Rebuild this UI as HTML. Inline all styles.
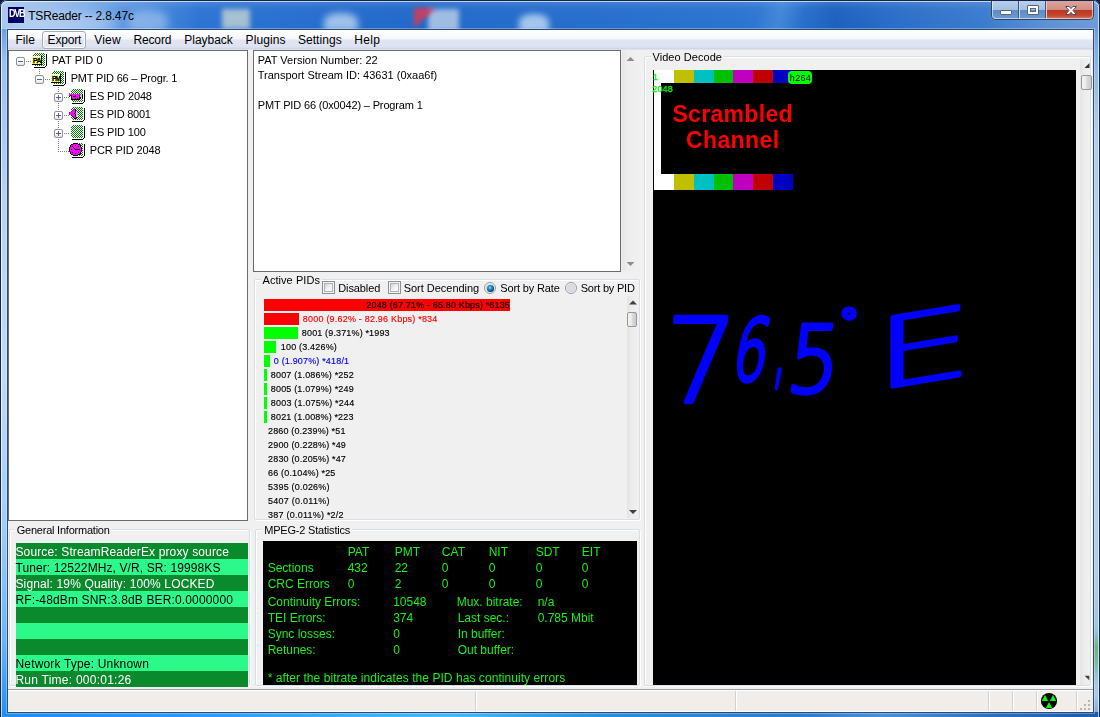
<!DOCTYPE html>
<html><head><meta charset="utf-8"><title>TSReader -- 2.8.47c</title>
<style>
html,body{margin:0;padding:0}
body{width:1100px;height:717px;overflow:hidden;position:relative;background:#0b1a40;font-family:"Liberation Sans",sans-serif;font-size:11px;color:#000}
div,svg{position:absolute}
.t{white-space:pre}
#frame{left:0;top:0;width:1100px;height:717px;border-radius:7px 7px 0 0;background:linear-gradient(180deg,#86b0e4 0,#6ea2dd 12px,#6b9fdb 29px,#9dc0ea 60px,#b8d3f1 200px,#c0d9f4 380px,#a4cdf4 520px,#6cb4f4 640px,#3a9cf0 690px,#1e8ff0 717px)}
#tb{left:0;top:0;width:1100px;height:29px;overflow:hidden;border-radius:7px 7px 0 0;background:linear-gradient(180deg,rgba(255,255,255,.16) 0,rgba(255,255,255,.03) 30%,rgba(255,255,255,0) 100%),linear-gradient(90deg,#a9c8ef 0,#8db6ea 50px,#5a96e2 120px,#2b73d3 200px,#2068ca 400px,#256dcc 600px,#2a73d0 740px,#2e78d3 780px,#1b60be 835px,#2a6ec9 900px,#3a7bce 985px,#5e92d5 1050px,#6d9cd6 1100px)}
#fr-outer{left:0;top:0;width:1098px;height:725px;border:1px solid #14254a;border-radius:7px 7px 2px 2px}
#fr-inner{left:1px;top:1px;width:1096px;height:725px;border:1px solid rgba(255,255,255,.65);border-radius:6px 6px 1px 1px}
#cap{left:991px;top:1px;width:103px;height:19px}
#client{left:7px;top:29px;width:1085px;height:682px;border:1px solid #2a4a78;background:#f0f0f0;outline:1px solid rgba(255,255,255,.3)}
#menubar{left:8px;top:30px;width:1085px;height:20px;background:linear-gradient(180deg,#fff 0,#f6f7fc 9px,#e2e6f3 10px,#dde2f0 17px,#cdd3e4 19px,#f0f0f0 20px)}
#pidlist{left:0;top:0}
</style></head>
<body>
<svg width="0" height="0" style="left:0;top:0"><defs>
<pattern id="gck" width="2" height="2" patternUnits="userSpaceOnUse"><rect width="2" height="2" fill="#fff"/><rect x="1" y="0" width="1" height="1" fill="#008000"/><rect x="0" y="1" width="1" height="1" fill="#008000"/></pattern>
<pattern id="yck" width="2" height="2" patternUnits="userSpaceOnUse"><rect width="2" height="2" fill="#ffff00"/><rect x="0" y="0" width="1" height="1" fill="#fff"/><rect x="1" y="1" width="1" height="1" fill="#fff"/></pattern>
</defs></svg>
<div id="frame"></div>
<div id="tb"><div style="left:8px;top:10px;width:110px;height:26px;background:#cfe0f6;opacity:.55;filter:blur(7px);border-radius:50%"></div><div style="left:128px;top:10px;width:40px;height:24px;background:#a9c8f0;opacity:.6;filter:blur(4px);border-radius:40%"></div><div style="left:222px;top:9px;width:28px;height:20px;background:#f0f0d2;opacity:.62;filter:blur(2.5px)"></div><div style="left:324px;top:13px;width:34px;height:18px;background:#b4d0f0;opacity:.85;filter:blur(3.5px);border-radius:45% 45% 0 0"></div><div style="left:428px;top:9px;width:31px;height:22px;background:#adc6e6;opacity:.9;filter:blur(2.5px)"></div><div style="left:414px;top:8px;width:0;height:0;border-top:20px solid #d23c58;border-right:22px solid transparent;opacity:.9;filter:blur(2px)"></div><div style="left:519px;top:14px;width:30px;height:18px;background:#b9d6f3;opacity:.85;filter:blur(3px);border-radius:45% 45% 0 0"></div><div style="left:740px;top:-10px;width:80px;height:50px;background:linear-gradient(105deg,rgba(255,255,255,0) 25%,rgba(110,165,230,.3) 50%,rgba(255,255,255,0) 75%)"></div></div>
<div style="left:1094px;top:29px;width:6px;height:688px;background:linear-gradient(180deg,#6b9fdb 0,#8fb6e6 40px,#adcbef 100px,#b9d3f2 300px,#aecbee 560px,#9cc4e0 600px,#6fb08c 618px,#79b89a 632px,#a6c8ea 655px,#a9c8ee 665px,#8db0de 680px,#6a94c8 700px,#4a7cc0 712px)"></div>
<div style="left:1px;top:712px;width:1098px;height:5px;background:linear-gradient(90deg,#1e8ff0 0,#2a9cf4 200px,#44b8f8 450px,#2a8ee0 600px,#2a7cd0 800px,#4a90d8 880px,#2a6cc0 1000px,#1c5cb0 1100px)"></div>
<div id="fr-outer"></div><div id="fr-inner"></div>
<div style="left:8px;top:7px;width:16px;height:16px;background:#000064"></div>
<div class="t" style="left:9px;top:9px;font-size:9px;line-height:10px;font-weight:bold;color:#fff;letter-spacing:-1.2px;transform:scaleY(1.15);transform-origin:0 8px">DVB</div>
<div id="cap">
<div style="left:0;top:0;width:28px;height:19px;background:linear-gradient(180deg,#b9cfea 0,#a3bfe3 47%,#5d8cc6 50%,#6f9cd3 100%);border-radius:0 0 0 5px"></div>
<div style="left:28px;top:0;width:27px;height:19px;background:linear-gradient(180deg,#b9cfea 0,#a3bfe3 47%,#5d8cc6 50%,#6f9cd3 100%)"></div>
<div style="left:55px;top:0;width:48px;height:19px;background:linear-gradient(180deg,#dba49c 0,#d18c82 47%,#bd3822 50%,#c5452c 75%,#d58a72 100%);border-radius:0 0 5px 0"></div>
<div style="left:27px;top:0;width:1px;height:19px;background:#3b5782"></div><div style="left:28px;top:0;width:1px;height:19px;background:#c9d9ee"></div>
<div style="left:54px;top:0;width:1px;height:19px;background:#3b5782"></div><div style="left:55px;top:0;width:1px;height:19px;background:#ecc9c4"></div>
<div style="left:0;top:0;width:101px;height:18px;border:1px solid #2d4468;border-top:none;border-radius:0 0 5px 5px"></div>
<div style="left:1px;top:0;width:99px;height:17px;border:1px solid rgba(255,255,255,.55);border-top:none;border-radius:0 0 4px 4px"></div>
<div style="left:9px;top:9px;width:10px;height:3px;background:#fff;border:1px solid #5a6477;border-radius:1px"></div>
<div style="left:36px;top:4px;width:10px;height:8px;border:1px solid #5a6477;border-radius:1px"></div>
<div style="left:37px;top:5px;width:6px;height:4px;border:2px solid #fff"></div>
<div style="left:39px;top:7px;width:4px;height:2px;border:1px solid #5a6477"></div>
<svg style="left:73px;top:4px" width="14" height="11" viewBox="0 0 14 11"><path d="M1.5 1.5H5.2L7 3.6L8.8 1.5H12.5L9 5.4L12.5 9.5H8.8L7 7.3L5.2 9.5H1.5L5 5.4Z" fill="#fff" stroke="#4a4f5e" stroke-width="1"/></svg>
</div>
<div id="client"></div>
<div id="menubar"></div>
<div style="left:42px;top:31px;width:42px;height:16px;border:1px solid #a8acb6;border-radius:3px;background:linear-gradient(180deg,#fbfcfe 0,#eef1f8 50%,#dfe4f0 52%,#e4e9f4 100%);box-shadow:inset 0 0 0 1px rgba(255,255,255,.8)"></div>
<div style="left:8px;top:50px;width:238px;height:469px;border:1px solid #6b6b6b;background:#fff"></div>
<div style="left:26px;top:61px;width:5px;height:1px;background:repeating-linear-gradient(90deg,#808080 0,#808080 1px,transparent 1px,transparent 2px)"></div>
<div style="left:39px;top:69px;width:1px;height:7px;background:repeating-linear-gradient(180deg,#808080 0,#808080 1px,transparent 1px,transparent 2px)"></div>
<div style="left:45px;top:79px;width:5px;height:1px;background:repeating-linear-gradient(90deg,#808080 0,#808080 1px,transparent 1px,transparent 2px)"></div>
<div style="left:58px;top:87px;width:1px;height:63px;background:repeating-linear-gradient(180deg,#808080 0,#808080 1px,transparent 1px,transparent 2px)"></div>
<div style="left:64px;top:97px;width:5px;height:1px;background:repeating-linear-gradient(90deg,#808080 0,#808080 1px,transparent 1px,transparent 2px)"></div>
<div style="left:64px;top:115px;width:5px;height:1px;background:repeating-linear-gradient(90deg,#808080 0,#808080 1px,transparent 1px,transparent 2px)"></div>
<div style="left:64px;top:133px;width:5px;height:1px;background:repeating-linear-gradient(90deg,#808080 0,#808080 1px,transparent 1px,transparent 2px)"></div>
<div style="left:58px;top:151px;width:11px;height:1px;background:repeating-linear-gradient(90deg,#808080 0,#808080 1px,transparent 1px,transparent 2px)"></div>
<div style="left:16px;top:57px;width:7px;height:7px;border:1px solid #919191;border-radius:2px;background:linear-gradient(180deg,#fff 0,#fff 45%,#e3e3e3 100%)"></div><div style="left:18px;top:61px;width:5px;height:1px;background:#4b63a7"></div>
<div style="left:35px;top:75px;width:7px;height:7px;border:1px solid #919191;border-radius:2px;background:linear-gradient(180deg,#fff 0,#fff 45%,#e3e3e3 100%)"></div><div style="left:37px;top:79px;width:5px;height:1px;background:#4b63a7"></div>
<div style="left:54px;top:93px;width:7px;height:7px;border:1px solid #919191;border-radius:2px;background:linear-gradient(180deg,#fff 0,#fff 45%,#e3e3e3 100%)"></div><div style="left:56px;top:97px;width:5px;height:1px;background:#4b63a7"></div><div style="left:58px;top:95px;width:1px;height:5px;background:#4b63a7"></div>
<div style="left:54px;top:111px;width:7px;height:7px;border:1px solid #919191;border-radius:2px;background:linear-gradient(180deg,#fff 0,#fff 45%,#e3e3e3 100%)"></div><div style="left:56px;top:115px;width:5px;height:1px;background:#4b63a7"></div><div style="left:58px;top:113px;width:1px;height:5px;background:#4b63a7"></div>
<div style="left:54px;top:129px;width:7px;height:7px;border:1px solid #919191;border-radius:2px;background:linear-gradient(180deg,#fff 0,#fff 45%,#e3e3e3 100%)"></div><div style="left:56px;top:133px;width:5px;height:1px;background:#4b63a7"></div><div style="left:58px;top:131px;width:1px;height:5px;background:#4b63a7"></div>
<svg style="left:31px;top:52px" width="16" height="16" viewBox="0 0 16 16" shape-rendering="crispEdges"><path d="M3 0H13V1H14V2H15V13H14V14H13V15H3V14H2V13H1V2H2V1H3Z" fill="#fff"/><path d="M4 1H13V2H14V12H14V13H13V14H4V13H3V12H2V3H3V2H4Z" fill="url(#gck)"/><rect x="15" y="2" width="1" height="12" fill="#000"/><rect x="14" y="14" width="1" height="1" fill="#000"/><rect x="3" y="15" width="11" height="1" fill="#000"/><rect x="0" y="4" width="11" height="9" fill="#fff"/><rect x="1" y="5" width="9" height="7" fill="url(#yck)"/><rect x="10" y="4" width="1" height="9" fill="#000"/><rect x="1" y="12" width="10" height="1" fill="#000"/></svg>
<svg style="left:50px;top:70px" width="16" height="16" viewBox="0 0 16 16" shape-rendering="crispEdges"><path d="M3 0H13V1H14V2H15V13H14V14H13V15H3V14H2V13H1V2H2V1H3Z" fill="#fff"/><path d="M4 1H13V2H14V12H14V13H13V14H4V13H3V12H2V3H3V2H4Z" fill="url(#gck)"/><rect x="15" y="2" width="1" height="12" fill="#000"/><rect x="14" y="14" width="1" height="1" fill="#000"/><rect x="3" y="15" width="11" height="1" fill="#000"/><rect x="0" y="4" width="11" height="9" fill="#fff"/><rect x="1" y="5" width="9" height="7" fill="url(#yck)"/><rect x="10" y="4" width="1" height="9" fill="#000"/><rect x="1" y="12" width="10" height="1" fill="#000"/></svg>
<svg style="left:69px;top:88px" width="16" height="16" viewBox="0 0 16 16" shape-rendering="crispEdges"><path d="M3 0H13V1H14V2H15V13H14V14H13V15H3V14H2V13H1V2H2V1H3Z" fill="#fff"/><path d="M4 1H13V2H14V12H14V13H13V14H4V13H3V12H2V3H3V2H4Z" fill="url(#gck)"/><rect x="15" y="2" width="1" height="12" fill="#000"/><rect x="14" y="14" width="1" height="1" fill="#000"/><rect x="3" y="15" width="11" height="1" fill="#000"/><rect x="0" y="5" width="1" height="1" fill="#ff00ff"/><rect x="0" y="6" width="11" height="1" fill="#ff00ff"/><rect x="13" y="6" width="1" height="1" fill="#000"/><rect x="0" y="7" width="1" height="1" fill="#ff00ff"/><rect x="1" y="7" width="2" height="1" fill="#000"/><rect x="3" y="7" width="3" height="1" fill="#ff00ff"/><rect x="6" y="7" width="1" height="1" fill="#000"/><rect x="7" y="7" width="3" height="1" fill="#ff00ff"/><rect x="10" y="7" width="1" height="1" fill="#000"/><rect x="11" y="7" width="2" height="1" fill="#c0c0c0"/><rect x="13" y="7" width="1" height="1" fill="#000"/><rect x="0" y="8" width="1" height="1" fill="#000"/><rect x="2" y="8" width="1" height="1" fill="#000"/><rect x="3" y="8" width="1" height="1" fill="#ff00ff"/><rect x="4" y="8" width="3" height="1" fill="#000"/><rect x="7" y="8" width="3" height="1" fill="#ff00ff"/><rect x="10" y="8" width="1" height="1" fill="#000"/><rect x="11" y="8" width="2" height="1" fill="#c0c0c0"/><rect x="13" y="8" width="1" height="1" fill="#000"/><rect x="2" y="9" width="1" height="1" fill="#000"/><rect x="3" y="9" width="7" height="1" fill="#ff00ff"/><rect x="10" y="9" width="2" height="1" fill="#000"/><rect x="12" y="9" width="1" height="1" fill="#c0c0c0"/><rect x="13" y="9" width="1" height="1" fill="#000"/><rect x="2" y="10" width="1" height="1" fill="#000"/><rect x="3" y="10" width="3" height="1" fill="#ff00ff"/><rect x="6" y="10" width="1" height="1" fill="#000"/><rect x="7" y="10" width="1" height="1" fill="#ff00ff"/><rect x="8" y="10" width="1" height="1" fill="#000"/><rect x="9" y="10" width="1" height="1" fill="#ff00ff"/><rect x="10" y="10" width="2" height="1" fill="#000"/><rect x="13" y="10" width="1" height="1" fill="#000"/><rect x="2" y="11" width="9" height="1" fill="#000"/></svg>
<svg style="left:69px;top:106px" width="16" height="16" viewBox="0 0 16 16" shape-rendering="crispEdges"><path d="M3 0H13V1H14V2H15V13H14V14H13V15H3V14H2V13H1V2H2V1H3Z" fill="#fff"/><path d="M4 1H13V2H14V12H14V13H13V14H4V13H3V12H2V3H3V2H4Z" fill="url(#gck)"/><rect x="15" y="2" width="1" height="12" fill="#000"/><rect x="14" y="14" width="1" height="1" fill="#000"/><rect x="3" y="15" width="11" height="1" fill="#000"/><rect x="4" y="3" width="1" height="1" fill="#800080"/><rect x="5" y="3" width="1" height="1" fill="#ff00ff"/><rect x="6" y="3" width="1" height="1" fill="#000"/><rect x="3" y="4" width="1" height="1" fill="#800080"/><rect x="4" y="4" width="2" height="1" fill="#ff00ff"/><rect x="6" y="4" width="1" height="1" fill="#000"/><rect x="2" y="5" width="1" height="1" fill="#800080"/><rect x="3" y="5" width="3" height="1" fill="#ff00ff"/><rect x="6" y="5" width="1" height="1" fill="#000"/><rect x="7" y="5" width="1" height="1" fill="#c0c0c0"/><rect x="0" y="6" width="1" height="1" fill="#800080"/><rect x="1" y="6" width="5" height="1" fill="#ff00ff"/><rect x="6" y="6" width="1" height="1" fill="#000"/><rect x="7" y="6" width="2" height="1" fill="#c0c0c0"/><rect x="0" y="7" width="5" height="1" fill="#ff00ff"/><rect x="5" y="7" width="1" height="1" fill="#000"/><rect x="7" y="7" width="2" height="1" fill="#c0c0c0"/><rect x="0" y="8" width="1" height="1" fill="#800080"/><rect x="1" y="8" width="5" height="1" fill="#ff00ff"/><rect x="6" y="8" width="1" height="1" fill="#000"/><rect x="7" y="8" width="2" height="1" fill="#c0c0c0"/><rect x="2" y="9" width="1" height="1" fill="#000"/><rect x="3" y="9" width="3" height="1" fill="#ff00ff"/><rect x="6" y="9" width="1" height="1" fill="#000"/><rect x="7" y="9" width="2" height="1" fill="#c0c0c0"/><rect x="3" y="10" width="1" height="1" fill="#000"/><rect x="4" y="10" width="2" height="1" fill="#ff00ff"/><rect x="6" y="10" width="1" height="1" fill="#000"/><rect x="7" y="10" width="1" height="1" fill="#c0c0c0"/><rect x="4" y="11" width="1" height="1" fill="#000"/><rect x="5" y="11" width="2" height="1" fill="#ff00ff"/><rect x="7" y="11" width="1" height="1" fill="#000"/><rect x="5" y="12" width="2" height="1" fill="#000"/></svg>
<svg style="left:69px;top:124px" width="16" height="16" viewBox="0 0 16 16" shape-rendering="crispEdges"><path d="M3 0H13V1H14V2H15V13H14V14H13V15H3V14H2V13H1V2H2V1H3Z" fill="#fff"/><path d="M4 1H13V2H14V12H14V13H13V14H4V13H3V12H2V3H3V2H4Z" fill="url(#gck)"/><rect x="15" y="2" width="1" height="12" fill="#000"/><rect x="14" y="14" width="1" height="1" fill="#000"/><rect x="3" y="15" width="11" height="1" fill="#000"/></svg>
<svg style="left:69px;top:142px" width="16" height="16" viewBox="0 0 16 16" shape-rendering="crispEdges"><path d="M3 0H13V1H14V2H15V13H14V14H13V15H3V14H2V13H1V2H2V1H3Z" fill="#fff"/><path d="M4 1H13V2H14V12H14V13H13V14H4V13H3V12H2V3H3V2H4Z" fill="url(#gck)"/><rect x="15" y="2" width="1" height="12" fill="#000"/><rect x="14" y="14" width="1" height="1" fill="#000"/><rect x="3" y="15" width="11" height="1" fill="#000"/><rect x="4" y="1" width="5" height="1" fill="#000"/><rect x="2" y="2" width="2" height="1" fill="#000"/><rect x="4" y="2" width="5" height="1" fill="#ff00ff"/><rect x="9" y="2" width="2" height="1" fill="#000"/><rect x="1" y="3" width="1" height="1" fill="#000"/><rect x="2" y="3" width="4" height="1" fill="#ff00ff"/><rect x="6" y="3" width="1" height="1" fill="#000"/><rect x="7" y="3" width="4" height="1" fill="#ff00ff"/><rect x="11" y="3" width="1" height="1" fill="#000"/><rect x="1" y="4" width="1" height="1" fill="#000"/><rect x="2" y="4" width="1" height="1" fill="#ff00ff"/><rect x="3" y="4" width="1" height="1" fill="#000"/><rect x="4" y="4" width="5" height="1" fill="#ff00ff"/><rect x="9" y="4" width="1" height="1" fill="#000"/><rect x="10" y="4" width="1" height="1" fill="#ff00ff"/><rect x="11" y="4" width="1" height="1" fill="#000"/><rect x="0" y="5" width="1" height="1" fill="#000"/><rect x="1" y="5" width="3" height="1" fill="#ff00ff"/><rect x="4" y="5" width="1" height="1" fill="#000"/><rect x="5" y="5" width="7" height="1" fill="#ff00ff"/><rect x="12" y="5" width="1" height="1" fill="#000"/><rect x="0" y="6" width="1" height="1" fill="#000"/><rect x="1" y="6" width="4" height="1" fill="#ff00ff"/><rect x="5" y="6" width="1" height="1" fill="#000"/><rect x="6" y="6" width="6" height="1" fill="#ff00ff"/><rect x="12" y="6" width="1" height="1" fill="#000"/><rect x="0" y="7" width="1" height="1" fill="#000"/><rect x="1" y="7" width="1" height="1" fill="#ff00ff"/><rect x="2" y="7" width="1" height="1" fill="#000"/><rect x="3" y="7" width="3" height="1" fill="#ff00ff"/><rect x="6" y="7" width="5" height="1" fill="#000"/><rect x="11" y="7" width="1" height="1" fill="#ff00ff"/><rect x="12" y="7" width="1" height="1" fill="#000"/><rect x="0" y="8" width="1" height="1" fill="#000"/><rect x="1" y="8" width="11" height="1" fill="#ff00ff"/><rect x="12" y="8" width="1" height="1" fill="#000"/><rect x="0" y="9" width="1" height="1" fill="#000"/><rect x="1" y="9" width="11" height="1" fill="#ff00ff"/><rect x="12" y="9" width="1" height="1" fill="#000"/><rect x="1" y="10" width="1" height="1" fill="#000"/><rect x="2" y="10" width="1" height="1" fill="#ff00ff"/><rect x="3" y="10" width="1" height="1" fill="#000"/><rect x="4" y="10" width="5" height="1" fill="#ff00ff"/><rect x="9" y="10" width="1" height="1" fill="#000"/><rect x="10" y="10" width="1" height="1" fill="#ff00ff"/><rect x="11" y="10" width="1" height="1" fill="#000"/><rect x="1" y="11" width="1" height="1" fill="#000"/><rect x="2" y="11" width="4" height="1" fill="#ff00ff"/><rect x="6" y="11" width="1" height="1" fill="#000"/><rect x="7" y="11" width="4" height="1" fill="#ff00ff"/><rect x="11" y="11" width="1" height="1" fill="#000"/><rect x="2" y="12" width="2" height="1" fill="#000"/><rect x="4" y="12" width="5" height="1" fill="#ff00ff"/><rect x="9" y="12" width="2" height="1" fill="#000"/><rect x="4" y="13" width="5" height="1" fill="#000"/></svg>
<div style="left:253px;top:50px;width:366px;height:220px;border:1px solid #6b6b6b;background:#fff"></div>
<div style="left:622px;top:50px;width:16px;height:221px;background:linear-gradient(90deg,#e6e6e6 0,#ededed 30%,#f0f0f0 100%)"></div>
<svg style="left:0;top:0" width="1100" height="717"><polygon points="630.5,57 634.5,61 626.5,61" fill="#8c8c8c"/></svg>
<svg style="left:0;top:0" width="1100" height="717"><polygon points="630.5,266 634.5,262 626.5,262" fill="#8c8c8c"/></svg>
<div style="left:254px;top:279px;width:384px;height:239px;border:1px solid #d5dfe5;border-radius:2px;box-shadow:inset 1px 1px 0 #fff, 1px 1px 0 #fff"></div>
<div style="left:322px;top:281px;width:11px;height:11px;border:1px solid #8e8f8f;background:#f4f4f4"></div><div style="left:324px;top:283px;width:7px;height:7px;border:1px solid #aeb3b9;background:linear-gradient(135deg,#cfd3d9 0,#f3f4f6 55%,#fbfbfc 100%)"></div>
<div style="left:388px;top:281px;width:11px;height:11px;border:1px solid #8e8f8f;background:#f4f4f4"></div><div style="left:390px;top:283px;width:7px;height:7px;border:1px solid #aeb3b9;background:linear-gradient(135deg,#cfd3d9 0,#f3f4f6 55%,#fbfbfc 100%)"></div>
<div style="left:484px;top:282px;width:10px;height:10px;border:1px solid #9a9a9a;border-radius:50%;background:radial-gradient(circle at 50% 50%,#dfe2e6 0,#d4d8de 50%,#fafafa 72%)"></div><div style="left:486.5px;top:284.5px;width:7px;height:7px;border-radius:50%;background:radial-gradient(circle at 42% 38%,#b4f0f8 0,#1c90d8 26%,#1a84cc 42%,#0e3c66 64%,#0e3c66 100%)"></div>
<div style="left:565px;top:282px;width:10px;height:10px;border:1px solid #9a9a9a;border-radius:50%;background:radial-gradient(circle at 50% 50%,#dfe2e6 0,#d4d8de 50%,#fafafa 72%)"></div>
<div id="pidlist">
<div style="left:264px;top:299px;width:246px;height:12px;background:#f00"></div>
<div style="left:264px;top:313px;width:35px;height:12px;background:#f00"></div>
<div style="left:264px;top:327px;width:34px;height:12px;background:#0f0"></div>
<div style="left:264px;top:341px;width:12px;height:12px;background:#0f0"></div>
<div style="left:264px;top:355px;width:6px;height:12px;background:#0f0"></div>
<div style="left:264px;top:369px;width:3px;height:12px;background:#0f0"></div>
<div style="left:264px;top:383px;width:3px;height:12px;background:#0f0"></div>
<div style="left:264px;top:397px;width:3px;height:12px;background:#0f0"></div>
<div style="left:264px;top:411px;width:3px;height:12px;background:#0f0"></div>
</div>
<div style="left:627px;top:296px;width:11px;height:222px;background:linear-gradient(90deg,#e4e4e4 0,#ececec 40%,#f0f0f0 100%)"></div>
<svg style="left:0;top:0" width="1100" height="717"><polygon points="633,300.5 637,304.5 629,304.5" fill="#404040"/></svg>
<svg style="left:0;top:0" width="1100" height="717"><polygon points="633,514 637,510 629,510" fill="#404040"/></svg>
<div style="left:627px;top:312px;width:8px;height:13px;border:1px solid #979797;border-radius:2px;background:linear-gradient(90deg,#f5f5f5 0,#e9e9eb 45%,#d9dadc 55%,#c9cacd 100%)"></div>
<div style="left:9px;top:529px;width:239px;height:155px;border:1px solid #d5dfe5;border-radius:2px;box-shadow:inset 1px 1px 0 #fff, 1px 1px 0 #fff"></div>
<div style="left:16px;top:543px;width:232px;height:16px;background:#0b8a2d"></div>
<div style="left:16px;top:559px;width:232px;height:16px;background:#2bf98a"></div>
<div style="left:16px;top:575px;width:232px;height:16px;background:#0b8a2d"></div>
<div style="left:16px;top:591px;width:232px;height:16px;background:#2bf98a"></div>
<div style="left:16px;top:607px;width:232px;height:16px;background:#0b8a2d"></div>
<div style="left:16px;top:623px;width:232px;height:16px;background:#2bf98a"></div>
<div style="left:16px;top:639px;width:232px;height:16px;background:#0b8a2d"></div>
<div style="left:16px;top:655px;width:232px;height:16px;background:#2bf98a"></div>
<div style="left:16px;top:671px;width:232px;height:16px;background:#0b8a2d"></div>
<div style="left:255px;top:529px;width:383px;height:155px;border:1px solid #d5dfe5;border-radius:2px;box-shadow:inset 1px 1px 0 #fff, 1px 1px 0 #fff"></div>
<div style="left:263px;top:541px;width:374px;height:144px;background:#000"></div>
<div style="left:644px;top:56px;width:445px;height:628px;border:1px solid #d5dfe5;border-radius:2px;box-shadow:inset 1px 1px 0 #fff, 1px 1px 0 #fff"></div>
<div style="left:653px;top:70px;width:423px;height:615px;background:#000"></div>
<div style="left:654px;top:70px;width:20px;height:120px;background:#fff"></div>
<div style="left:674px;top:70px;width:20px;height:120px;background:#c0c000"></div>
<div style="left:694px;top:70px;width:20px;height:120px;background:#00c0c0"></div>
<div style="left:714px;top:70px;width:19px;height:120px;background:#00c000"></div>
<div style="left:733px;top:70px;width:20px;height:120px;background:#c000c0"></div>
<div style="left:753px;top:70px;width:20px;height:120px;background:#c00000"></div>
<div style="left:773px;top:70px;width:20px;height:120px;background:#0000c0"></div>
<div style="left:661px;top:83px;width:132px;height:91px;background:#000"></div>
<div style="left:788px;top:71px;width:24px;height:13px;background:#0f0;border-radius:4px"></div>
<div style="left:1080px;top:60px;width:10px;height:625px;background:linear-gradient(90deg,#e4e4e4 0,#ececec 40%,#f0f0f0 100%)"></div>
<div style="left:1081px;top:75px;width:9px;height:13px;border:1px solid #979797;border-radius:2px;background:linear-gradient(90deg,#f5f5f5 0,#e9e9eb 45%,#d9dadc 55%,#c9cacd 100%)"></div>
<svg style="left:0;top:0" width="1100" height="717"><polygon points="1084.5,68 1089.5,63 1089.5,68" fill="#303030"/><polygon points="1084.6,675.8 1089.3,675.8 1089.3,680.3" fill="#404040"/></svg>
<svg id="hand" style="left:0;top:0" width="1100" height="717"><g fill="#0000ff" stroke="#0000ff" stroke-linejoin="round" stroke-linecap="round" font-size="100" style="vector-effect:non-scaling-stroke"><text transform="translate(662.0,402.0) scale(1.1348,1.1655) skewX(-3)" font-family="DejaVu Sans,sans-serif" font-weight="200" stroke-width="4.5" style="vector-effect:non-scaling-stroke">7</text><text transform="translate(729.5,379.5) scale(0.5413,0.8431) skewX(-16)" font-family="DejaVu Sans,sans-serif" font-weight="200" stroke-width="4.5" style="vector-effect:non-scaling-stroke">6</text><text transform="translate(771.0,375.5) scale(0.5002,1.0596) skewX(-10)" font-family="DejaVu Sans,sans-serif" font-weight="200" stroke-width="3" style="vector-effect:non-scaling-stroke">,</text><text transform="translate(784.5,391.5) scale(0.8108,0.9197) skewX(-8)" font-family="DejaVu Sans,sans-serif" font-weight="200" stroke-width="4.5" style="vector-effect:non-scaling-stroke">5</text><text transform="translate(845.5,322.5) scale(0.1959,0.1897) " font-family="Liberation Sans,sans-serif" font-weight="700" stroke-width="9" style="vector-effect:non-scaling-stroke">°</text><text transform="translate(874.0,390.0) scale(1.5649,0.9647) skewY(-15)" font-family="DejaVu Sans,sans-serif" font-weight="200" stroke-width="4.5" style="vector-effect:non-scaling-stroke">E</text></g></svg>
<div style="left:8px;top:689px;width:1085px;height:1px;background:#a0a0a0"></div>
<div style="left:8px;top:690px;width:1085px;height:1px;background:#fff"></div>
<div style="left:8px;top:691px;width:1085px;height:20px;background:#f0edeb"></div>
<div style="left:8px;top:711px;width:1085px;height:1px;background:#fff"></div>
<div style="left:475px;top:691px;width:1px;height:20px;background:#d4d0cc"></div>
<div style="left:476px;top:691px;width:1px;height:20px;background:#fff"></div>
<div style="left:735px;top:691px;width:1px;height:20px;background:#d4d0cc"></div>
<div style="left:736px;top:691px;width:1px;height:20px;background:#fff"></div>
<div style="left:988px;top:691px;width:1px;height:20px;background:#d4d0cc"></div>
<div style="left:989px;top:691px;width:1px;height:20px;background:#fff"></div>
<div style="left:1012px;top:691px;width:1px;height:20px;background:#d4d0cc"></div>
<div style="left:1013px;top:691px;width:1px;height:20px;background:#fff"></div>
<div style="left:1036px;top:691px;width:1px;height:20px;background:#d4d0cc"></div>
<div style="left:1037px;top:691px;width:1px;height:20px;background:#fff"></div>
<div style="left:1076px;top:691px;width:1px;height:20px;background:#d4d0cc"></div>
<div style="left:1077px;top:691px;width:1px;height:20px;background:#fff"></div>
<svg style="left:1040px;top:692px" width="18" height="18" viewBox="0 0 18 18"><circle cx="9" cy="9" r="8.1" fill="#000"/>
<path d="M5 2.8L8.1 9H1.9Z M13 2.8L16.1 9H9.9Z M9 10L12.1 16.1H5.9Z" fill="#0f0"/></svg>
<div style="left:1088px;top:700px;width:2px;height:2px;background:#b8b4ae"></div><div style="left:1088px;top:704px;width:2px;height:2px;background:#b8b4ae"></div><div style="left:1088px;top:708px;width:2px;height:2px;background:#b8b4ae"></div><div style="left:1084px;top:704px;width:2px;height:2px;background:#b8b4ae"></div><div style="left:1084px;top:708px;width:2px;height:2px;background:#b8b4ae"></div><div style="left:1080px;top:708px;width:2px;height:2px;background:#b8b4ae"></div>
<div class="t" style="left:28.16px;top:9px;font-size:12px;line-height:14px;letter-spacing:-0.166px;">TSReader -- 2.8.47c</div>
<div class="t" style="left:15.46px;top:33px;font-size:12px;line-height:14px;letter-spacing:0.004px;">File</div>
<div class="t" style="left:47.56px;top:33px;font-size:12px;line-height:14px;letter-spacing:-0.155px;">Export</div>
<div class="t" style="left:94.16px;top:33px;font-size:12px;line-height:14px;letter-spacing:0.216px;">View</div>
<div class="t" style="left:133.56px;top:33px;font-size:12px;line-height:14px;letter-spacing:-0.171px;">Record</div>
<div class="t" style="left:184.36px;top:33px;font-size:12px;line-height:14px;letter-spacing:-0.043px;">Playback</div>
<div class="t" style="left:245.56px;top:33px;font-size:12px;line-height:14px;letter-spacing:0.114px;">Plugins</div>
<div class="t" style="left:297.96px;top:33px;font-size:12px;line-height:14px;letter-spacing:0.050px;">Settings</div>
<div class="t" style="left:354.36px;top:33px;font-size:12px;line-height:14px;letter-spacing:0.268px;">Help</div>
<div id="dlg" style="left:0;top:0;width:1100px;height:717px;will-change:transform">
<div class="t" style="left:51.73px;top:54px;font-size:11px;line-height:12px;letter-spacing:0.099px;">PAT PID 0</div>
<div class="t" style="left:70.73px;top:72px;font-size:11px;line-height:12px;letter-spacing:-0.192px;">PMT PID 66 – Progr. 1</div>
<div class="t" style="left:89.73px;top:90px;font-size:11px;line-height:12px;letter-spacing:-0.133px;">ES PID 2048</div>
<div class="t" style="left:89.73px;top:108px;font-size:11px;line-height:12px;letter-spacing:-0.242px;">ES PID 8001</div>
<div class="t" style="left:89.73px;top:126px;font-size:11px;line-height:12px;letter-spacing:-0.155px;">ES PID 100</div>
<div class="t" style="left:89.73px;top:144px;font-size:11px;line-height:12px;letter-spacing:-0.102px;">PCR PID 2048</div>
<div class="t" style="left:32.81px;top:57px;font-size:7px;line-height:7px;letter-spacing:-0.654px;font-weight:bold;will-change:transform;-webkit-text-stroke:0.25px;">PA</div>
<div class="t" style="left:51.81px;top:75px;font-size:7px;line-height:7px;letter-spacing:-1.295px;font-weight:bold;will-change:transform;-webkit-text-stroke:0.25px;">PM</div>
<div class="t" style="left:257.73px;top:54px;font-size:11px;line-height:12px;letter-spacing:0.004px;">PAT Version Number: 22</div>
<div class="t" style="left:257.73px;top:69px;font-size:11px;line-height:12px;letter-spacing:0.002px;">Transport Stream ID: 43631 (0xaa6f)</div>
<div class="t" style="left:257.73px;top:99px;font-size:11px;line-height:12px;letter-spacing:-0.156px;">PMT PID 66 (0x0042) – Program 1</div>
<div class="t" style="left:338.23px;top:282px;font-size:11px;line-height:12px;letter-spacing:-0.110px;">Disabled</div>
<div class="t" style="left:403.73px;top:282px;font-size:11px;line-height:12px;letter-spacing:-0.028px;">Sort Decending</div>
<div class="t" style="left:500.23px;top:282px;font-size:11px;line-height:12px;letter-spacing:-0.143px;">Sort by Rate</div>
<div class="t" style="left:580.73px;top:282px;font-size:11px;line-height:12px;letter-spacing:-0.211px;">Sort by PID</div>
<div class="t" style="left:366.37px;top:300px;font-size:9px;line-height:10px;letter-spacing:0.158px;transform:scaleY(1.1);transform-origin:0 8px;-webkit-text-stroke:0.15px;">2048 (67.71% - 65.80 Kbps) *6135</div>
<div class="t" style="left:302.87px;top:314px;font-size:9px;line-height:10px;letter-spacing:0.203px;color:#f00;transform:scaleY(1.1);transform-origin:0 8px;-webkit-text-stroke:0.15px;">8000 (9.62% - 82.96 Kbps) *834</div>
<div class="t" style="left:301.87px;top:328px;font-size:9px;line-height:10px;letter-spacing:0.147px;transform:scaleY(1.1);transform-origin:0 8px;-webkit-text-stroke:0.15px;">8001 (9.371%) *1993</div>
<div class="t" style="left:280.87px;top:342px;font-size:9px;line-height:10px;letter-spacing:0.177px;transform:scaleY(1.1);transform-origin:0 8px;-webkit-text-stroke:0.15px;">100 (3.426%)</div>
<div class="t" style="left:273.87px;top:356px;font-size:9px;line-height:10px;letter-spacing:0.165px;color:#00f;transform:scaleY(1.1);transform-origin:0 8px;-webkit-text-stroke:0.15px;">0 (1.907%) *418/1</div>
<div class="t" style="left:270.87px;top:370px;font-size:9px;line-height:10px;letter-spacing:0.162px;transform:scaleY(1.1);transform-origin:0 8px;-webkit-text-stroke:0.15px;">8007 (1.086%) *252</div>
<div class="t" style="left:270.87px;top:384px;font-size:9px;line-height:10px;letter-spacing:0.162px;transform:scaleY(1.1);transform-origin:0 8px;-webkit-text-stroke:0.15px;">8005 (1.079%) *249</div>
<div class="t" style="left:270.87px;top:398px;font-size:9px;line-height:10px;letter-spacing:0.189px;transform:scaleY(1.1);transform-origin:0 8px;-webkit-text-stroke:0.15px;">8003 (1.075%) *244</div>
<div class="t" style="left:270.87px;top:412px;font-size:9px;line-height:10px;letter-spacing:0.145px;transform:scaleY(1.1);transform-origin:0 8px;-webkit-text-stroke:0.15px;">8021 (1.008%) *223</div>
<div class="t" style="left:268.07px;top:426px;font-size:9px;line-height:10px;letter-spacing:0.142px;transform:scaleY(1.1);transform-origin:0 8px;-webkit-text-stroke:0.15px;">2860 (0.239%) *51</div>
<div class="t" style="left:268.07px;top:440px;font-size:9px;line-height:10px;letter-spacing:0.171px;transform:scaleY(1.1);transform-origin:0 8px;-webkit-text-stroke:0.15px;">2900 (0.228%) *49</div>
<div class="t" style="left:268.07px;top:454px;font-size:9px;line-height:10px;letter-spacing:0.171px;transform:scaleY(1.1);transform-origin:0 8px;-webkit-text-stroke:0.15px;">2830 (0.205%) *47</div>
<div class="t" style="left:268.07px;top:468px;font-size:9px;line-height:10px;letter-spacing:0.162px;transform:scaleY(1.1);transform-origin:0 8px;-webkit-text-stroke:0.15px;">66 (0.104%) *25</div>
<div class="t" style="left:268.07px;top:482px;font-size:9px;line-height:10px;letter-spacing:0.202px;transform:scaleY(1.1);transform-origin:0 8px;-webkit-text-stroke:0.15px;">5395 (0.026%)</div>
<div class="t" style="left:268.07px;top:496px;font-size:9px;line-height:10px;letter-spacing:0.253px;transform:scaleY(1.1);transform-origin:0 8px;-webkit-text-stroke:0.15px;">5407 (0.011%)</div>
<div class="t" style="left:268.07px;top:510px;font-size:9px;line-height:10px;letter-spacing:0.228px;transform:scaleY(1.1);transform-origin:0 8px;-webkit-text-stroke:0.15px;">387 (0.011%) *2/2</div>
<div class="t" style="left:15.46px;top:545px;font-size:12px;line-height:14px;letter-spacing:0.137px;color:#fff;">Source: StreamReaderEx proxy source</div>
<div class="t" style="left:15.46px;top:561px;font-size:12px;line-height:14px;letter-spacing:0.103px;">Tuner: 12522MHz, V/R, SR: 19998KS</div>
<div class="t" style="left:15.46px;top:577px;font-size:12px;line-height:14px;letter-spacing:0.134px;color:#fff;">Signal: 19% Quality: 100% LOCKED</div>
<div class="t" style="left:15.46px;top:593px;font-size:12px;line-height:14px;letter-spacing:0.145px;">RF:-48dBm SNR:3.8dB BER:0.0000000</div>
<div class="t" style="left:15.46px;top:657px;font-size:12px;line-height:14px;letter-spacing:0.177px;">Network Type: Unknown</div>
<div class="t" style="left:15.46px;top:673px;font-size:12px;line-height:14px;letter-spacing:0.245px;color:#fff;">Run Time: 000:01:26</div>
<div class="t" style="left:347.66px;top:545px;font-size:12px;line-height:14px;color:#1af01a;">PAT</div>
<div class="t" style="left:394.66px;top:545px;font-size:12px;line-height:14px;color:#1af01a;">PMT</div>
<div class="t" style="left:441.86px;top:545px;font-size:12px;line-height:14px;color:#1af01a;">CAT</div>
<div class="t" style="left:488.66px;top:545px;font-size:12px;line-height:14px;color:#1af01a;">NIT</div>
<div class="t" style="left:535.66px;top:545px;font-size:12px;line-height:14px;color:#1af01a;">SDT</div>
<div class="t" style="left:581.86px;top:545px;font-size:12px;line-height:14px;color:#1af01a;">EIT</div>
<div class="t" style="left:267.66px;top:561px;font-size:12px;line-height:14px;color:#1af01a;">Sections</div>
<div class="t" style="left:347.66px;top:561px;font-size:12px;line-height:14px;color:#1af01a;">432</div>
<div class="t" style="left:394.66px;top:561px;font-size:12px;line-height:14px;color:#1af01a;">22</div>
<div class="t" style="left:441.86px;top:561px;font-size:12px;line-height:14px;color:#1af01a;">0</div>
<div class="t" style="left:488.66px;top:561px;font-size:12px;line-height:14px;color:#1af01a;">0</div>
<div class="t" style="left:535.66px;top:561px;font-size:12px;line-height:14px;color:#1af01a;">0</div>
<div class="t" style="left:581.86px;top:561px;font-size:12px;line-height:14px;color:#1af01a;">0</div>
<div class="t" style="left:267.66px;top:577px;font-size:12px;line-height:14px;color:#1af01a;">CRC Errors</div>
<div class="t" style="left:347.66px;top:577px;font-size:12px;line-height:14px;color:#1af01a;">0</div>
<div class="t" style="left:394.66px;top:577px;font-size:12px;line-height:14px;color:#1af01a;">2</div>
<div class="t" style="left:441.86px;top:577px;font-size:12px;line-height:14px;color:#1af01a;">0</div>
<div class="t" style="left:488.66px;top:577px;font-size:12px;line-height:14px;color:#1af01a;">0</div>
<div class="t" style="left:535.66px;top:577px;font-size:12px;line-height:14px;color:#1af01a;">0</div>
<div class="t" style="left:581.86px;top:577px;font-size:12px;line-height:14px;color:#1af01a;">0</div>
<div class="t" style="left:267.66px;top:595px;font-size:12px;line-height:14px;color:#1af01a;">Continuity Errors:</div>
<div class="t" style="left:393.16px;top:595px;font-size:12px;line-height:14px;color:#1af01a;">10548</div>
<div class="t" style="left:456.66px;top:595px;font-size:12px;line-height:14px;color:#1af01a;">Mux. bitrate:</div>
<div class="t" style="left:537.66px;top:595px;font-size:12px;line-height:14px;color:#1af01a;">n/a</div>
<div class="t" style="left:267.66px;top:611px;font-size:12px;line-height:14px;color:#1af01a;">TEI Errors:</div>
<div class="t" style="left:393.16px;top:611px;font-size:12px;line-height:14px;color:#1af01a;">374</div>
<div class="t" style="left:457.66px;top:611px;font-size:12px;line-height:14px;color:#1af01a;">Last sec.:</div>
<div class="t" style="left:537.66px;top:611px;font-size:12px;line-height:14px;color:#1af01a;">0.785 Mbit</div>
<div class="t" style="left:267.66px;top:627px;font-size:12px;line-height:14px;color:#1af01a;">Sync losses:</div>
<div class="t" style="left:393.16px;top:627px;font-size:12px;line-height:14px;color:#1af01a;">0</div>
<div class="t" style="left:457.66px;top:627px;font-size:12px;line-height:14px;color:#1af01a;">In buffer:</div>
<div class="t" style="left:267.66px;top:643px;font-size:12px;line-height:14px;color:#1af01a;">Retunes:</div>
<div class="t" style="left:393.16px;top:643px;font-size:12px;line-height:14px;color:#1af01a;">0</div>
<div class="t" style="left:457.66px;top:643px;font-size:12px;line-height:14px;color:#1af01a;">Out buffer:</div>
<div class="t" style="left:267.66px;top:671px;font-size:12px;line-height:14px;letter-spacing:0.058px;color:#1af01a;">* after the bitrate indicates the PID has continuity errors</div>
<div class="t" style="left:652.97px;top:72px;font-size:9px;line-height:10px;color:#0f0;-webkit-text-stroke:0.3px #0f0;">1</div>
<div class="t" style="left:652.37px;top:84px;font-size:9px;line-height:10px;letter-spacing:0.110px;color:#0f0;-webkit-text-stroke:0.3px #0f0;">2048</div>
<div class="t" style="left:789.87px;top:73px;font-size:9px;line-height:10px;letter-spacing:0.285px;">h264</div>
<div class="t" style="left:672.39px;top:101px;font-size:23px;line-height:26px;letter-spacing:0.320px;color:#f00;font-weight:bold;">Scrambled</div>
<div class="t" style="left:685.89px;top:127px;font-size:23px;line-height:26px;letter-spacing:0.422px;color:#f00;font-weight:bold;">Channel</div>
<div class="t" style="left:262.53px;top:274px;font-size:11px;line-height:12px;letter-spacing:0.052px;background:#f0f0f0;padding:0 2px;margin-left:-2px;">Active PIDs</div>
<div class="t" style="left:16.73px;top:524px;font-size:11px;line-height:12px;letter-spacing:-0.226px;background:#f0f0f0;padding:0 2px;margin-left:-2px;">General Information</div>
<div class="t" style="left:264.23px;top:524px;font-size:11px;line-height:12px;letter-spacing:-0.195px;background:#f0f0f0;padding:0 2px;margin-left:-2px;">MPEG-2 Statistics</div>
<div class="t" style="left:652.53px;top:51px;font-size:11px;line-height:12px;letter-spacing:0.044px;background:#f0f0f0;padding:0 2px;margin-left:-2px;">Video Decode</div>
</div>
</body></html>
